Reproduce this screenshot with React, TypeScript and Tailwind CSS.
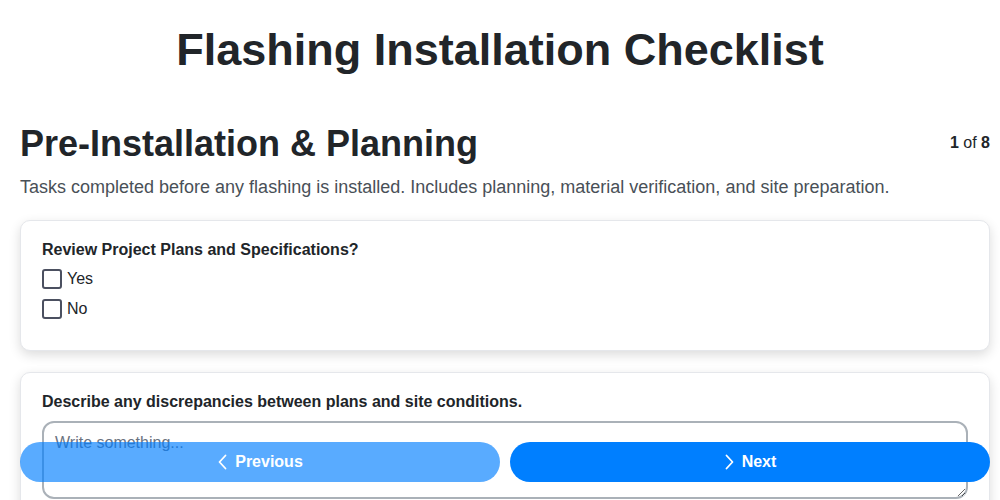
import React from "react";

export default function App() {
  return (
    <div className="min-h-screen bg-white pl-5 pr-[10px] text-[#212529]" style={{ fontFamily: '"Liberation Sans", Arial, sans-serif' }}>
      <h1 className="pr-[10px] pt-[21px] text-center text-[45px] font-bold leading-[58px]">Flashing Installation Checklist</h1>
      <div className="mt-[43px] flex items-start justify-between">
        <h2 className="text-[36px] font-bold leading-[44px]">Pre-Installation &amp; Planning</h2>
        <div className="pt-[9px] text-[16px]"><span className="font-bold">1</span> of <span className="font-bold">8</span></div>
      </div>
      <p className="mt-[9px] text-[18px] leading-[24px] text-[#495057]">
        Tasks completed before any flashing is installed. Includes planning, material verification, and site preparation.
      </p>
      <div className="mt-[21px] flex flex-col gap-[21px]">
        <div className="rounded-[10px] border border-[#e5e7eb] bg-white px-[21px] pb-[31px] pt-[19px] shadow-[0_4px_12px_rgba(0,0,0,0.14)]">
          <div className="text-[16px] font-bold leading-[20px]">Review Project Plans and Specifications?</div>
          <div className="mt-[9px] flex flex-col gap-[10px]">
            {["Yes", "No"].map((o) => (
              <label key={o} className="flex items-center gap-[5px] text-[16px] leading-[20px]">
                <span className="h-[20px] w-[20px] rounded-[3px] border-2 border-[#4b5060]" />
                {o}
              </label>
            ))}
          </div>
        </div>
        <div className="rounded-[10px] border border-[#e5e7eb] bg-white px-[21px] pb-[20px] pt-[19px] shadow-[0_4px_12px_rgba(0,0,0,0.14)]">
          <div className="text-[16px] font-bold leading-[20px]">Describe any discrepancies between plans and site conditions.</div>
          <textarea
            placeholder="Write something..."
            className="mt-[9px] block h-[78px] w-full resize-y rounded-[12px] border-2 border-[#aab1b8] px-[11px] py-[8px] text-[16px] placeholder-[#6b7280] outline-none"
          />
        </div>
      </div>
      <div className="fixed bottom-[18px] left-[20px] right-[10px] flex gap-[10px]">
        <button className="flex h-[40px] flex-1 items-center justify-center gap-[7px] rounded-full bg-[#007fff] text-[16px] font-bold text-white opacity-65">
          <svg width="11" height="18" viewBox="0 0 11 18" fill="none" stroke="white" strokeWidth="1.8" strokeLinecap="round" strokeLinejoin="round"><path d="M8.5 2.5L2.5 9l6 6.5" /></svg>
          Previous
        </button>
        <button className="flex h-[40px] flex-1 items-center justify-center gap-[7px] rounded-full bg-[#007fff] text-[16px] font-bold text-white">
          <svg width="11" height="18" viewBox="0 0 11 18" fill="none" stroke="white" strokeWidth="1.8" strokeLinecap="round" strokeLinejoin="round"><path d="M2.5 2.5L8.5 9l-6 6.5" /></svg>
          Next
        </button>
      </div>
    </div>
  );
}
